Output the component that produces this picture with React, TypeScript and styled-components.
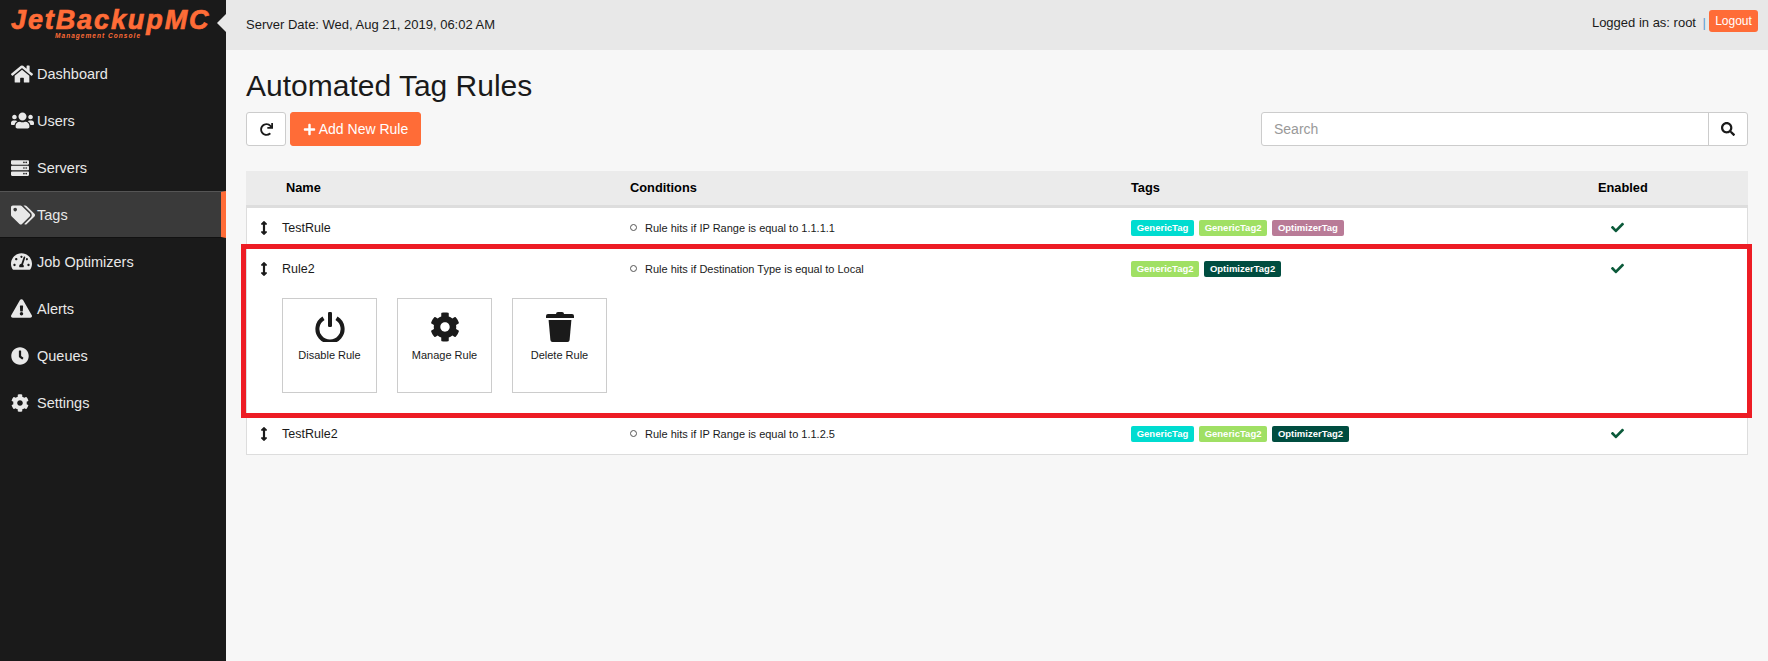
import React from "react";
import styled, { createGlobalStyle } from "styled-components";
import {
  FaArrowsAltV,
  FaCheck,
  FaClock,
  FaCog,
  FaExclamationTriangle,
  FaHome,
  FaPlus,
  FaRedo,
  FaSearch,
  FaServer,
  FaTachometerAlt,
  FaTags,
  FaUsers,
} from "react-icons/fa";

const GlobalStyle = createGlobalStyle`
  html, body {
    margin: 0;
    padding: 0;
    background: #f7f7f7;
    font-family: "Liberation Sans", Arial, sans-serif;
    color: #1a1a1a;
  }
  * {
    box-sizing: border-box;
  }
`;

const navItems = [
  { label: "Dashboard", icon: <FaHome size={22} /> },
  { label: "Users", icon: <FaUsers size={23} /> },
  { label: "Servers", icon: <FaServer size={18} /> },
  { label: "Tags", icon: <FaTags size={24} />, active: true },
  { label: "Job Optimizers", icon: <FaTachometerAlt size={21} /> },
  { label: "Alerts", icon: <FaExclamationTriangle size={21} /> },
  { label: "Queues", icon: <FaClock size={18} /> },
  { label: "Settings", icon: <FaCog size={18} /> },
];

const tagColors: Record<string, string> = {
  GenericTag: "#00dcd0",
  GenericTag2: "#a0e064",
  OptimizerTag: "#b97b97",
  OptimizerTag2: "#004d40",
};

const rules = [
  {
    name: "TestRule",
    condition: "Rule hits if IP Range is equal to 1.1.1.1",
    tags: ["GenericTag", "GenericTag2", "OptimizerTag"],
  },
  {
    name: "Rule2",
    condition: "Rule hits if Destination Type is equal to Local",
    tags: ["GenericTag2", "OptimizerTag2"],
    open: true,
  },
  {
    name: "TestRule2",
    condition: "Rule hits if IP Range is equal to 1.1.2.5",
    tags: ["GenericTag", "GenericTag2", "OptimizerTag2"],
  },
];

const PowerIcon = () => (
  <svg width="30" height="30" viewBox="0 0 30 30">
    <path
      d="M8.5 6.2 A12.6 12.6 0 1 0 21.5 6.2"
      fill="none"
      stroke="#1a1a1a"
      strokeWidth="4"
      strokeLinecap="butt"
    />
    <rect x="13" y="0" width="4" height="15" rx="1.2" fill="#1a1a1a" />
  </svg>
);

const TrashIcon = () => (
  <svg width="28" height="30" viewBox="0 0 28 30">
    <path
      d="M10 2 Q10 0 12 0 H16 Q18 0 18 2 H26 Q28 2 28 4 V6 H0 V4 Q0 2 2 2 Z"
      fill="#1a1a1a"
    />
    <path
      d="M2.6 8 H25.4 L23.6 28 Q23.4 30 21.5 30 H6.5 Q4.6 30 4.4 28 Z"
      fill="#1a1a1a"
    />
  </svg>
);

const App = () => {
  return (
    <Page>
      <GlobalStyle />
      <Sidebar>
        <Logo>
          <LogoName>JetBackupMC</LogoName>
          <LogoSub>Management Console</LogoSub>
        </Logo>
        <Nav>
          {navItems.map((item) => (
            <NavItem key={item.label} $active={item.active}>
              <NavIcon>{item.icon}</NavIcon>
              {item.label}
            </NavItem>
          ))}
        </Nav>
      </Sidebar>
      <Main>
        <TopBar>
          <Notch />
          <span>Server Date: Wed, Aug 21, 2019, 06:02 AM</span>
          <UserBox>
            Logged in as: root <Pipe>|</Pipe>
            <LogoutButton>Logout</LogoutButton>
          </UserBox>
        </TopBar>
        <Content>
          <Title>Automated Tag Rules</Title>
          <Toolbar>
            <RefreshButton>
              <FaRedo size={13} />
            </RefreshButton>
            <AddButton>
              <FaPlus size={13} />
              Add New Rule
            </AddButton>
            <SearchBox>
              <SearchInput placeholder="Search" />
              <SearchButton>
                <FaSearch size={14} />
              </SearchButton>
            </SearchBox>
          </Toolbar>
          <Table>
            <HeaderRow>
              <NameHead>Name</NameHead>
              <div>Conditions</div>
              <div>Tags</div>
              <div>Enabled</div>
            </HeaderRow>
            {rules.map((rule) => (
              <Rule key={rule.name}>
                <RuleRow>
                  <NameCell>
                    <Handle>
                      <FaArrowsAltV size={14} />
                    </Handle>
                    {rule.name}
                  </NameCell>
                  <Conditions>
                    <li>{rule.condition}</li>
                  </Conditions>
                  <TagList>
                    {rule.tags.map((tag) => (
                      <Tag key={tag} $color={tagColors[tag]}>
                        {tag}
                      </Tag>
                    ))}
                  </TagList>
                  <CheckCell>
                    <FaCheck size={13} />
                  </CheckCell>
                </RuleRow>
                {rule.open && (
                  <>
                    <Actions>
                      <ActionCard>
                        <PowerIcon />
                        Disable Rule
                      </ActionCard>
                      <ActionCard>
                        <FaCog size={30} />
                        Manage Rule
                      </ActionCard>
                      <ActionCard>
                        <TrashIcon />
                        Delete Rule
                      </ActionCard>
                    </Actions>
                    <Highlight />
                  </>
                )}
              </Rule>
            ))}
          </Table>
        </Content>
      </Main>
    </Page>
  );
};

const Page = styled.div`
  display: flex;
  width: 1768px;
  height: 661px;
  overflow: hidden;
`;

const Sidebar = styled.aside`
  width: 226px;
  flex-shrink: 0;
  background: #1a1a1a;
`;

const Logo = styled.div`
  height: 50px;
  padding: 8px 0 0 11px;
  color: #ff6c37;
  font-style: italic;
  font-weight: bold;
  white-space: nowrap;
`;

const LogoName = styled.div`
  height: 24px;
  font-size: 27px;
  line-height: 24px;
  letter-spacing: 1.9px;
  -webkit-text-stroke: 0.7px #ff6c37;
`;

const LogoSub = styled.div`
  height: 8px;
  margin-left: 44px;
  font-size: 6.5px;
  line-height: 8px;
  letter-spacing: 1.05px;
`;

const Nav = styled.nav`
  display: flex;
  flex-direction: column;
`;

const NavItem = styled.div<{ $active?: boolean }>`
  display: flex;
  align-items: center;
  height: 47px;
  padding-left: 11px;
  color: #e8e8e8;
  font-size: 14.5px;
  background: ${(p) => (p.$active ? "#3a3a3a" : "transparent")};
  border-top: 1px solid ${(p) => (p.$active ? "#555" : "transparent")};
  border-bottom: 1px solid ${(p) => (p.$active ? "#111" : "transparent")};
  border-right: 5px solid ${(p) => (p.$active ? "#ff6c37" : "transparent")};
`;

const NavIcon = styled.span`
  display: flex;
  align-items: center;
  width: 26px;
`;

const Main = styled.main`
  flex: 1;
  min-width: 0;
`;

const TopBar = styled.header`
  position: relative;
  display: flex;
  align-items: center;
  justify-content: space-between;
  height: 50px;
  padding: 0 10px 2px 20px;
  background: #e8e8e8;
  font-size: 13px;
`;

const Notch = styled.span`
  position: absolute;
  left: -9px;
  top: 14px;
  border-top: 9px solid transparent;
  border-bottom: 9px solid transparent;
  border-right: 9px solid #e8e8e8;
`;

const UserBox = styled.div`
  display: flex;
  align-items: center;
  gap: 3px;
  margin-top: -4px;
  white-space: pre;
`;

const Pipe = styled.span`
  color: #5a9bd0;
`;

const LogoutButton = styled.button`
  width: 49px;
  height: 22px;
  margin-top: -3px;
  padding: 0;
  border: 0;
  border-radius: 3px;
  background: #ff6c37;
  color: #fff;
  font: 12px "Liberation Sans", Arial, sans-serif;
`;

const Content = styled.div`
  padding: 0 20px;
`;

const Title = styled.h1`
  margin: 19px 0 0;
  height: 43px;
  font-size: 30px;
  font-weight: normal;
  line-height: 33px;
`;

const Toolbar = styled.div`
  display: flex;
  align-items: center;
  gap: 4px;
  height: 34px;
`;

const RefreshButton = styled.button`
  display: flex;
  align-items: center;
  justify-content: center;
  width: 40px;
  height: 34px;
  padding: 0;
  border: 1px solid #ccc;
  border-radius: 3px;
  background: #fff;
  color: #1a1a1a;
`;

const AddButton = styled.button`
  display: flex;
  align-items: center;
  justify-content: center;
  gap: 3px;
  width: 131px;
  height: 34px;
  padding: 0;
  border: 1px solid #ff6c37;
  border-radius: 3px;
  background: #ff6c37;
  color: #fff;
  font: 14px "Liberation Sans", Arial, sans-serif;
`;

const SearchBox = styled.div`
  display: flex;
  width: 487px;
  height: 34px;
  margin-left: auto;
  border: 1px solid #ccc;
  border-radius: 3px;
  background: #fff;
`;

const SearchInput = styled.input`
  flex: 1;
  min-width: 0;
  padding: 0 12px;
  border: 0;
  outline: 0;
  background: transparent;
  font: 14px "Liberation Sans", Arial, sans-serif;
  &::placeholder {
    color: #999;
  }
`;

const SearchButton = styled.div`
  display: flex;
  align-items: center;
  justify-content: center;
  width: 39px;
  border-left: 1px solid #ccc;
  color: #1a1a1a;
`;

const Table = styled.section`
  margin-top: 25px;
  border-left: 1px solid #ddd;
  border-right: 1px solid #ddd;
  border-bottom: 1px solid #ddd;
  background: #fff;
`;

const HeaderRow = styled.div`
  display: grid;
  grid-template-columns: 384px 501px 1fr 150px;
  align-items: center;
  height: 37px;
  margin: 0 -1px;
  padding-bottom: 1px;
  background: #ebebeb;
  border-bottom: 3px solid #ddd;
  color: #000;
  font-size: 12.8px;
  font-weight: bold;
`;

const NameHead = styled.div`
  padding-left: 40px;
`;

const Rule = styled.div`
  position: relative;
`;

const RuleRow = styled.div`
  display: grid;
  grid-template-columns: 383px 501px 1fr 150px;
  align-items: center;
  height: 41px;
  padding-bottom: 2px;
  ${Rule}:last-child & {
    padding-bottom: 0;
  }
`;

const NameCell = styled.div`
  display: flex;
  align-items: center;
  font-size: 12.5px;
`;

const Handle = styled.span`
  display: flex;
  justify-content: center;
  width: 35px;
  padding-right: 1px;
  color: #1a1a1a;
`;

const Conditions = styled.ul`
  margin: 0;
  padding: 0;
  list-style: none;
  font-size: 11px;
  li {
    display: flex;
    align-items: center;
    gap: 8px;
  }
  li::before {
    content: "";
    width: 5px;
    height: 5px;
    border: 1px solid #555;
    border-radius: 50%;
  }
`;

const TagList = styled.div`
  display: flex;
  gap: 5px;
`;

const Tag = styled.span<{ $color: string }>`
  display: flex;
  align-items: center;
  height: 16px;
  padding: 0 5.7px;
  border-radius: 2px;
  background: ${(p) => p.$color};
  color: #fff;
  font-size: 9.5px;
  font-weight: bold;
`;

const CheckCell = styled.div`
  display: flex;
  padding-left: 14px;
  color: #0b5a3a;
`;

const Actions = styled.div`
  display: flex;
  gap: 20px;
  padding: 8px 0 20px 35px;
`;

const ActionCard = styled.div`
  display: flex;
  flex-direction: column;
  align-items: center;
  width: 95px;
  height: 95px;
  padding-top: 13px;
  gap: 7px;
  border: 1px solid #ccc;
  color: #1a1a1a;
  font-size: 11px;
`;

const Highlight = styled.div`
  position: absolute;
  inset: -5px -5px -5px -6px;
  border: 5px solid #ed1c24;
  pointer-events: none;
`;

export default App;
